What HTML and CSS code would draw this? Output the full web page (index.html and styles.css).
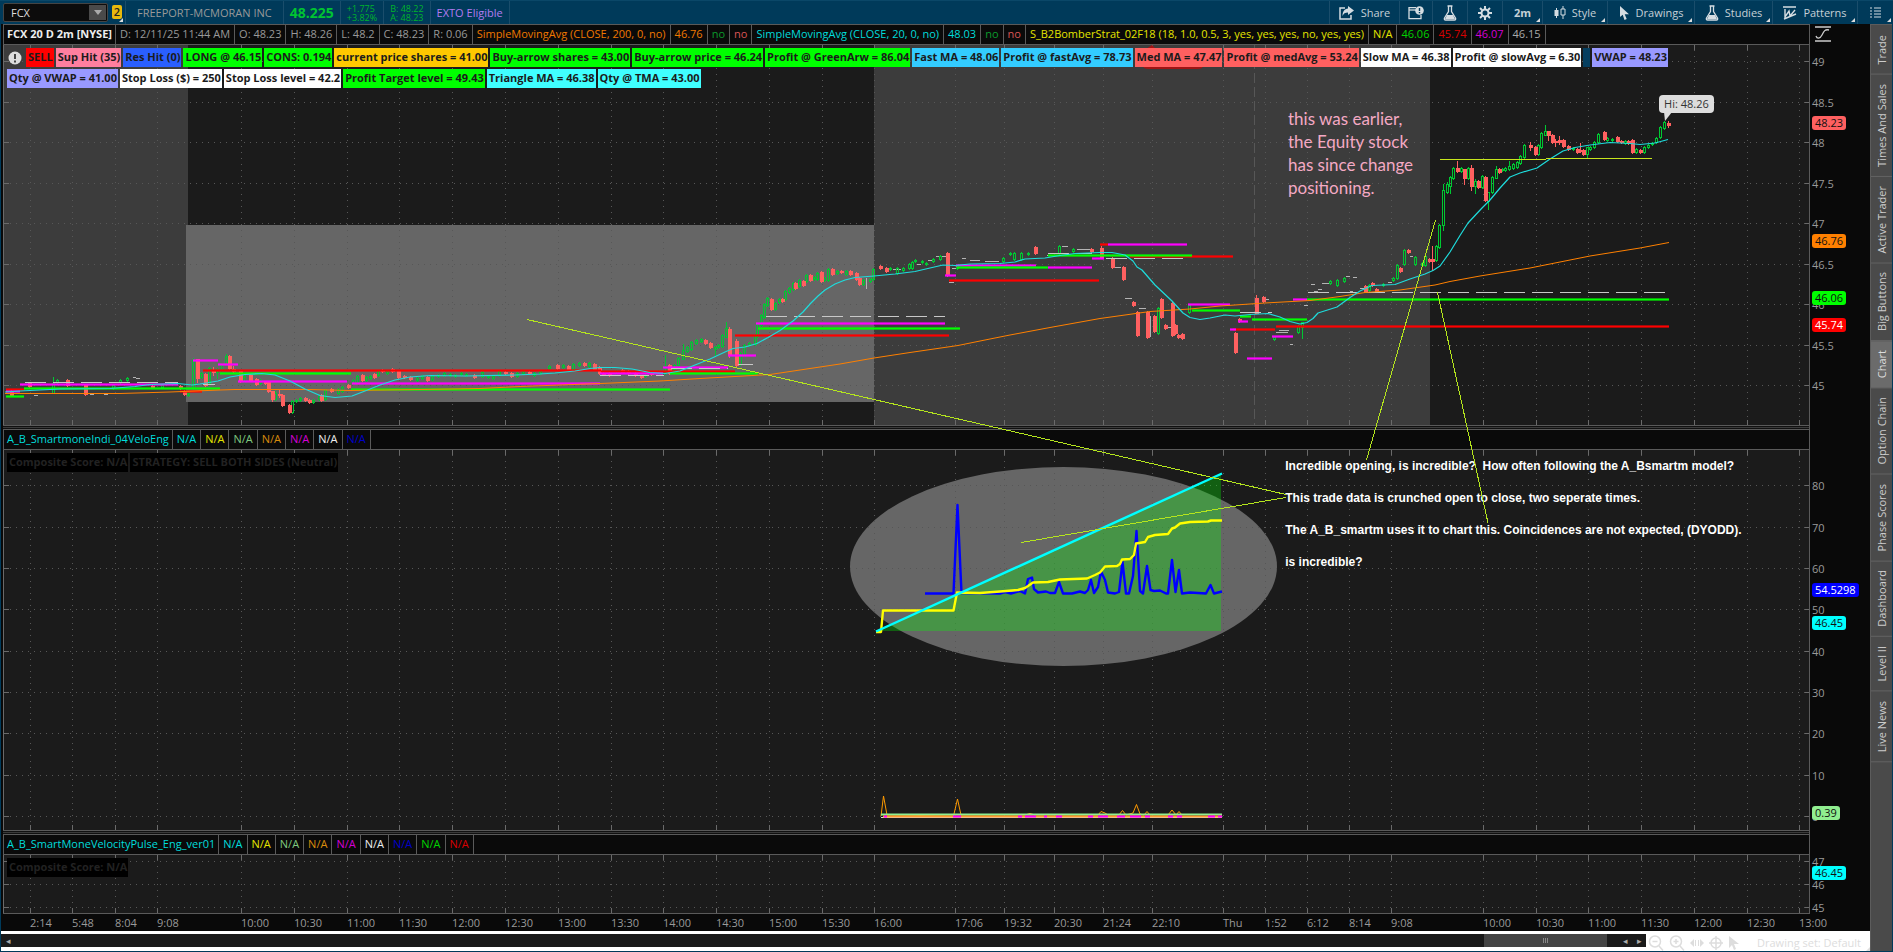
FILE: index.html
```
<!DOCTYPE html>
<html lang="en">
<head>
<meta charset="utf-8">
<title>FCX 20 D 2m</title>
<link rel="stylesheet" href="styles.css">
</head>
<body>
<header class="toolbar">
  <div class="symbol">
    <input class="symbol-input" type="text" value="FCX" aria-label="Symbol">
    <button class="symbol-drop" aria-label="Recent symbols"><svg width="10" height="6" viewBox="0 0 10 6"><path d="M1 0h8L5 5z" fill="#aaa"/></svg></button>
  </div>
  <button class="link-badge corner" aria-label="Link group"><span class="badge">2</span></button>
  <div class="tcell name">FREEPORT-MCMORAN INC</div>
  <div class="tcell last">48.225</div>
  <div class="tcell pair"><span>+1.775</span><span>+3.82%</span></div>
  <div class="tcell pair"><span>B: 48.22</span><span>A: 48.23</span></div>
  <div class="tcell exto">EXTO Eligible</div>
  <nav class="tools">
    <button class="tool t-share"><svg width="16" height="14" viewBox="0 0 16 14"><path d="M6 2H1v11h11V9" fill="none" stroke="#d5dde2" stroke-width="1.500"/><path d="M9 0l6 4.500-6 4.500V6.500C6 6.500 4.500 7.500 3.500 10 3.500 5.500 5.500 2.800 9 2.500z" fill="#d5dde2"/></svg>Share</button>
    <button class="tool t-alert" aria-label="Alerts"><svg width="16" height="14" viewBox="0 0 16 14"><path d="M8 1.700H1v11h12V9" fill="none" stroke="#d5dde2" stroke-width="1.300"/><path d="M1 4h7" stroke="#d5dde2" stroke-width="1.300"/><circle cx="11.500" cy="4.500" r="4.300" fill="#d5dde2"/><path d="M11.500 2v3M11.500 6v1.200" stroke="#003a5a" stroke-width="1.400"/></svg></button>
    <button class="tool t-lab" aria-label="Edit studies"><svg width="14" height="16" viewBox="0 0 14 16"><path d="M4.500 1h5M5.500 1v5.500L1.500 13c-.5 1 0 2 1 2h9c1 0 1.500-1 1-2L8.500 6.500V1" fill="none" stroke="#d5dde2" stroke-width="1.300"/><path d="M4 10h6l2 4H2z" fill="#d5dde2"/></svg></button>
    <button class="tool t-gear" aria-label="Settings"><svg width="14" height="14" viewBox="0 0 14 14"><circle cx="7" cy="7" r="3.500" fill="none" stroke="#d5dde2" stroke-width="2"/><path d="M7 0v3M7 11v3M0 7h3M11 7h3M2 2l2.200 2.200M9.800 9.800L12 12M12 2L9.800 4.200M4.200 9.800L2 12" stroke="#d5dde2" stroke-width="2"/></svg></button>
    <button class="tool t-agg corner"><b>2m</b></button>
    <button class="tool t-style corner"><svg width="12" height="14" viewBox="0 0 12 14"><path d="M2.500 2v10M9 0v3M9 9v4" stroke="#d5dde2"/><path d="M.5 4h4v6h-4z" fill="#d5dde2"/><path d="M7 3h4v6H7z" fill="none" stroke="#d5dde2"/></svg>Style</button>
    <button class="tool t-draw corner"><svg width="11" height="14" viewBox="0 0 11 14"><path d="M1 0v11l2.700-2.300L5.500 14l2.200-1-2-4.700H10z" fill="#d5dde2"/></svg>Drawings</button>
    <button class="tool t-study corner"><svg width="14" height="16" viewBox="0 0 14 16"><path d="M4.500 1h5M5.500 1v5.500L1.500 13c-.5 1 0 2 1 2h9c1 0 1.500-1 1-2L8.500 6.500V1" fill="none" stroke="#d5dde2" stroke-width="1.300"/><path d="M4 10h6l2 4H2z" fill="#d5dde2"/></svg>Studies</button>
    <button class="tool t-pat corner"><svg width="14" height="14" viewBox="0 0 14 14"><path d="M0 1h13M1 13L13 8M2 3v8l4-6 1 5 5-6" fill="none" stroke="#d5dde2" stroke-width="1.400"/></svg>Patterns</button>
    <button class="tool t-menu corner" aria-label="Menu"><svg width="11" height="11" viewBox="0 0 11 11"><path d="M0 1h2M4 1h7M0 4h2M4 4h7M0 7h2M4 7h7M0 10h2M4 10h7" stroke="#d5dde2"/></svg></button>
  </nav>
</header>

<main class="workspace">
  <section class="board">
    <div class="stack">
      <div class="studies row1">
        <span class="c-w"><b>FCX 20 D 2m [NYSE]</b></span><span>D: 12/11/25 11:44 AM</span><span>O: 48.23</span><span>H: 48.26</span><span>L: 48.2</span><span>C: 48.23</span><span>R: 0.06</span><span class="c-o">SimpleMovingAvg (CLOSE, 200, 0, no)</span><span class="c-o">46.76</span><span class="c-dg">no</span><span class="c-dr">no</span><span class="c-c">SimpleMovingAvg (CLOSE, 20, 0, no)</span><span class="c-c">48.03</span><span class="c-dg">no</span><span class="c-dr">no</span><span class="c-y">S_B2BomberStrat_02F18 (18, 1.0, 0.5, 3, yes, yes, yes, no, yes, yes)</span><span class="c-y">N/A</span><span class="c-g">46.06</span><span class="c-r">45.74</span><span class="c-m">46.07</span><span class="c-l">46.15</span>
      </div>
      <div class="plot row2">
        <svg class="canvas" id="price" viewBox="3 45 1806 380" preserveAspectRatio="none"></svg>
        <div class="labels">
          <div class="label-row">
            <svg class="warn" width="14" height="14" viewBox="0 0 14 14"><circle cx="7" cy="7" r="6.500" fill="#ddd"/><path d="M7 3v5M7 9.500v2" stroke="#333" stroke-width="1.800"/></svg>
            <span class="tag b-r">SELL</span><span class="tag b-pk">Sup Hit (35)</span><span class="tag b-bl">Res Hit (0)</span><span class="tag b-g">LONG @ 46.15</span><span class="tag b-g">CONS: 0.194</span><span class="tag b-o">current price shares = 41.00</span><span class="tag b-g">Buy-arrow shares = 43.00</span><span class="tag b-g">Buy-arrow price = 46.24</span><span class="tag b-g">Profit @ GreenArw = 86.04</span><span class="tag b-sk">Fast MA = 48.06</span><span class="tag b-sk">Profit @ fastAvg = 78.73</span><span class="tag b-co">Med MA = 47.47</span><span class="tag b-co">Profit @ medAvg = 53.24</span><span class="tag b-w">Slow MA = 46.38</span><span class="tag b-w">Profit @ slowAvg = 6.30</span><span class="tag b-t"></span><span class="tag b-v">VWAP = 48.23</span>
          </div>
          <div class="label-row">
            <span class="tag b-v">Qty @ VWAP = 41.00</span><span class="tag b-w">Stop Loss ($) = 250</span><span class="tag b-w">Stop Loss level = 42.2</span><span class="tag b-g">Profit Target level = 49.43</span><span class="tag b-cy">Triangle MA = 46.38</span><span class="tag b-cy">Qty @ TMA = 43.00</span>
          </div>
        </div>
        <p class="memo">this was earlier,<br>the Equity stock<br>has since change<br>positioning.</p>
        <div class="callout">Hi: 48.26</div>
      </div>
      <div class="axis row2" id="axis1"><svg class="fit" width="16" height="16" viewBox="0 0 16 16"><path d="M0 1h16M0 15h16" stroke="#ccc" stroke-width="1.600"/><path d="M1 10c1 3 4 3 6-1s3-6 7-5" fill="none" stroke="#ccc" stroke-width="1.300"/></svg></div>
      <div class="split row3"></div>
      <div class="studies row4">
        <span class="c-c">A_B_SmartmoneIndi_04VeloEng</span><span class="c-c">N/A</span><span class="c-y">N/A</span><span class="c-lg">N/A</span><span class="c-a">N/A</span><span class="c-m">N/A</span><span class="c-w">N/A</span><span class="c-b">N/A</span>
      </div>
      <div class="plot row5">
        <svg class="canvas" id="velo" viewBox="3 450 1806 380" preserveAspectRatio="none"></svg>
        <div class="labels"><div class="label-row"><span class="tag b-k">Composite Score: N/A</span><span class="tag b-k">STRATEGY: SELL BOTH SIDES (Neutral)</span></div></div>
        <div class="notes"><p>Incredible opening, is incredible?&nbsp; How often following the A_Bsmartm model?</p><p>This trade data is crunched open to close, two seperate times.</p><p>The A_B_smartm uses it to chart this. Coincidences are not expected, (DYODD).</p><p>is incredible?</p></div>
      </div>
      <div class="axis row5" id="axis2"></div>
      <div class="split row6"></div>
      <div class="studies row7">
        <span class="c-c">A_B_SmartMoneVelocityPulse_Eng_ver01</span><span class="c-c">N/A</span><span class="c-y">N/A</span><span class="c-lg">N/A</span><span class="c-a">N/A</span><span class="c-m">N/A</span><span class="c-w">N/A</span><span class="c-b">N/A</span><span class="c-g">N/A</span><span class="c-r">N/A</span>
      </div>
      <div class="plot row8">
        <svg class="canvas" id="pulse" viewBox="3 855 1806 58" preserveAspectRatio="none"></svg>
        <div class="labels"><div class="label-row"><span class="tag b-k">Composite Score: N/A</span></div></div>
      </div>
      <div class="axis row8" id="axis3"></div>
      <div class="times row9" id="times"></div>
      <svg class="pointers" viewBox="3 24 1807 907" preserveAspectRatio="none"><path d="M527 319.500L1286 494.500M1021 542.500L1286 497.500M1435.500 220L1366.500 460M1437.500 292.500L1488 523" fill="none" stroke="#b5e61d"/></svg>
    </div>
    <footer class="bottom">
      <div class="scroll">
        <button class="sbtn" aria-label="Scroll left">◂</button>
        <span class="track"><span class="thumb"></span></span>
        <button class="sbtn" aria-label="Step left">◂</button>
        <button class="sbtn" aria-label="Step right">▸</button>
      </div>
      <div class="bottom-tools">
        <button class="btool" aria-label="Zoom out"><svg width="16" height="16" viewBox="0 0 16 16"><circle cx="7" cy="6.500" r="5.500"/><path d="M4.500 6.500h5M11 11l4 4.500"/></svg></button>
        <button class="btool" aria-label="Zoom in"><svg width="16" height="16" viewBox="0 0 16 16"><circle cx="7" cy="6.500" r="5.500"/><path d="M4.500 6.500h5M7 4v5M11 11l4 4.500"/></svg></button>
        <button class="btool" aria-label="Pan"><svg width="14" height="16" viewBox="0 0 14 16"><path d="M0 8l4-4v8zM14 8l-4-4v8z" fill="#ddd" stroke="none"/><path d="M5.500 5v6M8.500 5v6" stroke-width="1"/></svg></button>
        <button class="btool" aria-label="Crosshair"><svg width="14" height="16" viewBox="0 0 14 16"><circle cx="7" cy="8" r="5"/><path d="M7 1v14M0 8h14"/></svg></button>
        <button class="btool" aria-label="Pointer"><svg width="12" height="16" viewBox="0 0 12 16"><path d="M1 1v12l3-3 2 5 2-1-2-5h5z" fill="#ddd" stroke="none"/></svg></button>
        <button class="btool set corner">Drawing set: Default</button>
      </div>
    </footer>
  </section>
  <nav class="side">
    <button>Trade</button><button>Times And Sales</button><button>Active Trader</button><button>Big Buttons</button><button class="on">Chart</button><button>Option Chain</button><button>Phase Scores</button><button>Dashboard</button><button>Level II</button><button>Live News</button>
  </nav>
</main>
<script src="chart.js"></script>
</body>
</html>
```
FILE: styles.css
```
* { box-sizing: border-box; }
body { margin: 0; height: 100vh; display: flex; flex-direction: column; overflow: hidden; background: #003a5a; font: 11px/14px "Open Sans", sans-serif; color: #999; }
button { font: inherit; color: inherit; background: none; border: 0; padding: 0; }
p { margin: 0; }

.toolbar { height: 24px; flex: none; display: flex; align-items: stretch; border-top: 1px solid #0a4768; padding-left: 3px; white-space: nowrap; }
.symbol { display: flex; width: 105px; height: 19px; margin-top: 2px; background: #0c0c0c; border: 1px solid #444; border-radius: 2px; }
.symbol-input { flex: 1; min-width: 0; border: 0; padding: 0 0 0 7px; background: none; font: inherit; color: #ddd; }
.symbol-drop { width: 17px; margin: 1px; background: #4a4a4a; display: grid; place-items: center; }
.link-badge { width: 17px; display: flex; padding: 4px 0 0 4px; }
.badge { width: 10px; height: 14px; border-radius: 2px; background: #e8b90c; color: #222; font-weight: 600; text-align: center; }
.corner { position: relative; }
.corner::after { content: ""; position: absolute; right: 2px; bottom: 2px; border: 2px solid transparent; border-right-color: #ddd; border-bottom-color: #ddd; }
.tcell { display: flex; align-items: center; padding: 0 6px; border-right: 1px solid #1a4d6b; }
.name { padding: 0 11px; border-left: 1px solid #1a4d6b; }
.last { font-size: 14px; font-weight: 700; color: #00c432; }
.pair { flex-direction: column; align-items: flex-start; justify-content: center; font-size: 9px; line-height: 9px; color: #00b32c; }
.exto { color: #b27bf0; }
.tools { margin-left: auto; display: flex; color: #c5d0d7; }
.tool { display: flex; align-items: center; justify-content: center; gap: 6px; border-left: 1px solid #1a4d6b; }
.t-share { width: 70px; }
.t-alert { width: 33px; }
.t-lab, .t-gear { width: 35px; }
.t-agg { width: 40px; }
.t-style { width: 65px; }
.t-draw { width: 87px; }
.t-study { width: 78px; }
.t-pat { width: 85px; }
.t-menu { width: 36px; }

.workspace { flex: 1; min-height: 0; display: flex; margin: 0 1px 1px 1px; }
.board { flex: 1; min-width: 0; display: flex; flex-direction: column; background: #090909; }
.stack { position: relative; flex: 1; min-height: 0; margin-left: 2px; display: grid; grid-template-columns: minmax(0, 1fr) 60px; grid-template-rows: 21px minmax(0, 381fr) 3px 21px minmax(0, 381fr) 3px 21px minmax(0, 59fr) 17px; }
.stack > * { grid-column: 1; }
.stack > .axis { grid-column: 2; }
.row1 { grid-row: 1; } .row2 { grid-row: 2; } .row3 { grid-row: 3; } .row4 { grid-row: 4; } .row5 { grid-row: 5; }
.row6 { grid-row: 6; } .row7 { grid-row: 7; } .row8 { grid-row: 8; } .row9 { grid-row: 9; }
.studies { display: flex; border: 1px solid #5a5a5a; background: #0a0a0a; overflow: hidden; white-space: nowrap; line-height: 18px; }
.studies span { padding: 0 4px; border-right: 1px solid #5a5a5a; }
.studies span:first-child { padding: 0 3px; }
.split { border-right: 1px solid #5a5a5a; background: linear-gradient(#111 1px, #3a3a3a 1px, #3a3a3a 2px, #111 2px); }
.c-w { color: #eee; } .c-o { color: #ef7800; } .c-a { color: #d98b0c; } .c-dg { color: #0a9a2c; } .c-dr { color: #d95555; }
.c-c { color: #00dcdc; } .c-y { color: #e4e400; } .c-g { color: #00d400; } .c-r { color: #d80000; } .c-m { color: #d400d4; }
.c-l { color: #aaa; } .c-lg { color: #7fc97f; } .c-b { color: #0000c8; }

.plot { position: relative; border: solid #5a5a5a; border-width: 0 1px 1px 0; background: #1b1b1b; }
.canvas, .pointers { position: absolute; inset: 0; width: 100%; height: 100%; }
.pointers { width: calc(100% - 60px); shape-rendering: crispEdges; pointer-events: none; z-index: 2; }
.labels { position: relative; display: flex; flex-direction: column; gap: 2px; padding: 3px 0 0 4px; }
.label-row { display: flex; gap: 2px; height: 19px; }
.warn { margin: 3px 2px 0 1px; flex: none; }
.tag { padding: 0 1px 0 2px; font-weight: 700; line-height: 18px; white-space: nowrap; color: #1b1b1b; }
.b-r { background: #f00; } .b-pk { background: #ff7f9f; } .b-bl { background: #2a5fff; } .b-g { background: #0f0; }
.b-o { background: #ffc800; } .b-sk { background: #33ccff; } .b-co { background: #ff6060; } .b-w { background: #fff; }
.b-t { background: #063f60; width: 7px; } .b-v { background: #9999ff; } .b-cy { background: #40ffff; } .b-k { background: #000; color: #222; }
.memo { position: absolute; left: 71.150%; top: 16.200%; font: 17px/23px Lato, sans-serif; color: #f4a9c4; white-space: nowrap; }
.callout { position: absolute; left: 91.700%; top: 13.100%; padding: 1px 5px; height: 18px; line-height: 16px; background: #ddd; color: #333; border-radius: 4px; white-space: nowrap; }
.notes { position: absolute; left: 71%; top: 0; font: bold 12px/32px "Liberation Sans", Arial, sans-serif; color: #fff; white-space: nowrap; }

.axis { position: relative; }
.fit { position: absolute; left: 5px; top: -19px; }
.tick, .bubble { position: absolute; left: 2px; transform: translateY(-50%); }
.bubble { padding: 0 3px; border-radius: 3px; line-height: 14px; color: #111; }
.bubble.light { color: #fff; }
.times { position: relative; }
.time { position: absolute; top: 2px; }

.bottom { height: 20px; flex: none; display: flex; background: #fff; padding-top: 3px; }
.scroll { flex: 1; height: 13px; display: flex; align-items: center; background: #1a1a1a; color: #999; }
.sbtn { width: 14px; font-size: 9px; line-height: 13px; color: #aaa; }
.track { flex: 1; height: 13px; display: flex; justify-content: flex-end; }
.thumb { width: 123px; background: repeating-linear-gradient(90deg, #888 0 1px, transparent 1px 2px) center / 5px 5px no-repeat #444; margin-right: 11px; }
.bottom-tools { width: 224px; display: flex; align-items: center; gap: 5px; padding-left: 2px; color: #ddd; }
.btool { height: 16px; }
.btool svg { display: block; fill: none; stroke: #ddd; stroke-width: 1.5; }
.set { flex: 1; text-align: right; padding-right: 9px; }
.set::after { right: 0; bottom: 0; }

.side { width: 22px; flex: none; display: flex; flex-direction: column; background: #4a4a4a; border-left: 1px solid #5c5c5c; border-top: 1px solid #5c5c5c; padding-top: 1px; color: #ccc; }
.side button { writing-mode: vertical-rl; transform: rotate(180deg); padding: 9px 0; line-height: 21px; border-top: 1px solid #636363; text-align: center; }
.side .on { background: #6b6b6b; color: #ddd; }
```
FILE: chart.js
```
const NS = 'http://www.w3.org/2000/svg';
const GREEN = '#00c832', RED = '#ff6060', GRAY = '#b4b4b4';

function add(svg, tag, attrs) {
  const el = document.createElementNS(NS, tag);
  for (const k in attrs) el.setAttribute(k, attrs[k]);
  svg.appendChild(el);
  return el;
}
function line(svg, d, stroke, width, extra) {
  return add(svg, 'path', Object.assign({ d, stroke, 'stroke-width': width || 1, fill: 'none' }, extra));
}
function poly(svg, points, stroke, width) {
  add(svg, 'polyline', { points, stroke, 'stroke-width': width, fill: 'none', 'stroke-linejoin': 'round' });
}

const times = [[30,'2:14'],[72,'5:48'],[115,'8:04'],[157,'9:08'],[241,'10:00'],[294,'10:30'],[347,'11:00'],[399,'11:30'],[452,'12:00'],[505,'12:30'],[558,'13:00'],[611,'13:30'],[663,'14:00'],[716,'14:30'],[769,'15:00'],[822,'15:30'],[874,'16:00'],[955,'17:06'],[1004,'19:32'],[1054,'20:30'],[1103,'21:24'],[1152,'22:10'],[1223,'Thu'],[1265,'1:52'],[1307,'6:12'],[1349,'8:14'],[1391,'9:08'],[1483,'10:00'],[1536,'10:30'],[1588,'11:00'],[1641,'11:30'],[1694,'12:00'],[1747,'12:30'],[1799,'13:00']];

function grid(svg, top, bottom, rows) {
  let dots = '', ticks = '', hdots = '';
  for (const [x] of times) {
    dots += `M${x + .5} ${top + 5}V${bottom - 5}`;
    ticks += `M${x + .5} ${top}v5M${x + .5} ${bottom - 5}v5`;
  }
  for (const y of rows) {
    hdots += `M10 ${y + .5}H1805`;
    ticks += `M4 ${y + .5}h5M1805 ${y + .5}h5`;
  }
  const crisp = { 'stroke-dasharray': '1 5', 'shape-rendering': 'crispEdges' };
  line(svg, dots, '#575757', 1, crisp);
  line(svg, hdots, '#575757', 1, crisp);
  line(svg, `${ticks}M3.5 ${top}V${bottom}`, '#6a6a6a', 1, { 'shape-rendering': 'crispEdges' });
}

function axis(id, top, height, ticks, bubbles) {
  const box = document.getElementById(id);
  const put = (cls, y, text, bg) => {
    const el = document.createElement('span');
    el.className = cls;
    el.textContent = text;
    el.style.top = ((y - top) / height * 100) + '%';
    if (bg) el.style.background = bg;
    box.appendChild(el);
  };
  ticks.forEach(([y, t]) => put('tick', y, t));
  bubbles.forEach(([y, t, bg, light]) => put('bubble' + (light ? ' light' : ''), y, t, bg));
}

/* price panel */
const price = document.getElementById('price');
add(price, 'rect', { x: 4, y: 45, width: 184, height: 380, fill: '#3c3c3c' });
add(price, 'rect', { x: 874, y: 45, width: 556, height: 380, fill: '#3c3c3c' });
add(price, 'rect', { x: 186, y: 225, width: 688, height: 177, fill: '#666' });
const rows1 = [61,102,142,183,223,264,304,345,385];
grid(price, 45, 425, rows1);
line(price, 'M1254.500 45V425', '#575757', 1, { 'stroke-dasharray': '10 4' });
add(price, 'path', { d: 'M1152 45l6 6h45v15q0 3-6 3h-48q-6 0-6-3V51z', fill: '#a01414' });

/* extended-hours prints: x1, x2, y */
const prints = [[133,136,377],[136,140,378],[34,38,395],[43,47,393],[70,74,393],[90,94,394],[104,108,394],[893,901,269],[917,921,264],[928,932,260],[936,946,256],[962,966,258],[970,980,260],[985,999,261],[1062,1068,246],[1077,1090,249],[1115,1121,267],[1125,1132,298],[1139,1146,308],[1167,1171,327],[1265,1269,299],[1276,1288,332],[1279,1289,330],[1290,1293,344],[1304,1308,305],[1311,1315,284],[1314,1318,291],[1318,1322,289],[1322,1329,283],[1346,1350,276],[1353,1357,277],[1350,1353,291],[1360,1364,288],[1388,1392,282],[1410,1413,256],[952,956,268],[949,954,282],[1047,1053,255]];
line(price, prints.map(([a, b, y]) => `M${a} ${y + .5}H${b}`).join(''), GRAY, 1);

/* candles: direction x bodyTop bodyBottom [wickTop wickBottom] */
const candles = `r 11 391 395,r 29 383 386,g 53 383 393 377 393,g 57 380 382,r 67 380 385,r 85 385 394,g 113 385 388,g 120 380 382,g 127 378 380,r 152 386 387,g 162 385 387,r 180 386 388,r 184 391 394,g 188 393 395,g 193 360 388 358 388,r 197 359 378 359 382,g 201 373 377,r 205 374 385,g 209 368 384,r 213 370 372 367 375,g 217 370 372 368 378,g 221 365 370,g 226 356 364 354 364,r 229 356 368,r 233 369 371 366 372,r 240 371 381,g 244 376 381,r 250 375 380,r 256 379 384,g 260 380 383,r 265 382 383,r 268 382 391,r 272 391 399 391 401,g 275 393 399 391 400,r 279 394 395 390 397,r 282 395 405,r 289 405 412,g 292 401 412,g 296 400 401,g 300 398 400,r 305 398 400,r 309 400 402,g 313 400 402,g 319 396 399,r 321 395 400,g 325 390 399,r 331 389 391,g 338 389 393,g 342 387 391,r 348 385 387,g 353 380 383,g 357 376 382,r 362 375 380,g 366 377 380,g 370 376 378,r 374 374 377,g 378 371 375,r 382 370 371,g 387 371 373,r 392 369 371,r 398 371 377,r 404 376 377,r 410 377 379,g 417 378 380,g 422 376 378,r 427 377 380,g 432 376 379,g 438 375 376,g 444 373 375,g 450 374 375,g 455 375 376,g 461 373 374,g 466 374 375,r 474 375 377,
g 482 372 376,g 488 376 377,g 493 376 378,g 499 371 375,r 505 372 373,r 511 373 376,g 517 373 376,g 523 371 373,r 529 372 373,g 534 373 375,g 540 371 373,g 549 366 368,r 557 365 368,g 563 365 367,r 568 366 369,g 573 364 369,g 579 363 365,r 584 363 365,g 589 363 366,r 594 364 369,r 599 367 373,r 603 373 374,r 609 373 375,g 616 371 373,r 622 370 372,r 628 371 373,r 635 373 375,r 641 376 377,g 645 373 376,r 651 373 374,g 658 371 373,g 665 366 372 355 374,r 669 365 373,g 674 365 369,g 678 358 365,g 683 350 359 344 359,g 687 347 351,g 691 342 349,g 696 340 343,g 701 339 341,r 705 340 343,r 710 343 347,g 715 347 349 346 356,g 718 345 347,g 722 335 346,g 726 328 337 322 337,r 729 329 355 327 357,r 736 341 365 339 367,g 740 353 364,g 744 345 355,g 749 343 345,g 755 335 344,g 757 324 336,g 761 315 325,g 764 304 317,g 767 298 305,r 771 299 309,g 775 303 309,g 779 299 302,r 782 299 301,g 785 291 299,g 789 288 292,g 793 283 289,r 795 283 288,g 799 280 286,r 803 281 285,g 806 275 281,r 810 275 280,g 814 277 279,g 817 273 279,r 821 272 281,g 824 278 280,g 828 269 280,r 832 269 274,g 837 271 273,r 841 271 272,g 846 271 274,r 850 271 274,r 856 273 279,r 859 278 284,g 863 280 284,g 870 279 281,g 873 269 279,
r 880 266 268,r 886 268 271,g 890 268 269,g 897 268 273,g 903 268 270,g 909 264 268,g 912 262 268,g 915 260 261,g 922 261 262,g 926 263 264,g 933 259 261,g 940 256 259,r 947 253 275,g 957 266 268,g 1003 258 261,g 1010 253 254,g 1014 253 259,g 1021 253 259,g 1028 253 254,r 1035 247 253,g 1059 246 253,g 1073 249 251,r 1091 249 251,r 1101 248 258 246 258,r 1112 258 267,r 1123 267 279,r 1133 302 305,r 1137 312 335,r 1147 312 337,r 1154 316 331,g 1158 308 333,r 1161 299 317,r 1165 325 328,r 1172 303 335,r 1175 325 333,r 1178 335 337,r 1182 334 338,g 1189 305 312,r 1235 333 352,r 1239 319 321,r 1256 298 313 295 313,r 1263 297 301,g 1274 337 339,g 1298 326 332,g 1302 322 327 322 338,g 1330 281 283,g 1337 280 285,g 1344 278 281,r 1365 286 291,g 1369 285 290,r 1372 283 285,r 1376 289 291,g 1383 284 285,g 1393 278 280,g 1397 265 278,r 1400 268 271,g 1404 250 264,r 1408 250 252,g 1415 257 264,g 1422 263 265,g 1425 256 265,r 1429 259 261,r 1432 259 261 246 270,
g 1436 246 260,g 1439 225 247,g 1443 190 225 184 230,g 1447 184 192 182 193,g 1450 177 186 176 193,g 1453 168 178,r 1457 168 171 161 172,g 1461 168 171,r 1464 169 178 169 184,g 1468 168 178,r 1471 168 186 165 190,g 1475 181 186 179 193,r 1478 181 187,g 1482 176 187,r 1485 177 200,g 1488 192 201 192 209,g 1492 177 192,g 1496 169 178 166 178,r 1499 169 172,g 1502 169 170,g 1505 168 170,g 1509 166 169 161 170,g 1513 164 168,g 1517 162 167,g 1520 156 163,g 1524 145 157,r 1530 145 147 142 150,r 1535 147 154,g 1538 145 154,g 1541 133 147,g 1545 131 135 125 135,r 1548 131 135 131 140,r 1552 135 142,r 1555 141 142 139 146,r 1559 140 142 136 144,r 1563 140 146,r 1568 146 149,g 1573 148 149,r 1577 149 152,r 1580 150 151 143 152,r 1583 150 154,g 1587 147 154 147 158,g 1590 147 149,g 1594 142 147,g 1598 134 142,r 1604 132 139,g 1607 138 140,g 1612 139 140,r 1617 137 141,r 1621 141 142,g 1625 141 143,r 1628 141 143,r 1632 140 152,g 1636 149 152,r 1640 150 152,g 1644 147 152,g 1648 145 147,g 1652 143 144,g 1656 138 142,g 1660 127 137,g 1664 122 128,r 1668 123 125 121 127`;
const shapes = { g: '', gw: '', r: '', rw: '' };
for (const item of candles.split(',')) {
  const [dir, ...nums] = item.trim().split(' ');
  const [x, top, bottom] = nums.map(Number);
  const wt = nums.length > 3 ? +nums[3] : top - 1;
  const wb = nums.length > 3 ? +nums[4] : bottom + 1;
  if (dir === 'g') {
    shapes.g += `M${x - .5} ${top + .5}h2V${bottom + .5}h-2z`;
    shapes.gw += `M${x + .5} ${wt}V${top}M${x + .5} ${bottom}V${wb + 1}`;
  } else {
    shapes.r += `M${x - 1} ${top}h4V${bottom + 1}h-4z`;
    shapes.rw += `M${x + .5} ${wt}V${wb + 1}`;
  }
}
const sharp = { 'shape-rendering': 'crispEdges' };
line(price, shapes.g, GREEN, 1, sharp);
line(price, shapes.gw, GREEN, 1, sharp);
line(price, shapes.rw, RED, 1, sharp);
add(price, 'path', { d: shapes.r, fill: RED });
line(price, 'M866.500 278V289M1150.500 316V337', GRAY, 1);

/* support and resistance levels: x1, x2, y */
const levels = {
  '#ff0000': [[6,25,389],[180,202,391],[203,601,370],[601,735,371],[735,949,335],[949,1099,280],[1100,1108,244],[1130,1233,256],[1233,1275,329],[1276,1669,326]],
  '#ff00ff': [[6,20,391],[20,178,384],[193,218,360],[218,238,364],[238,347,381],[352,600,383],[600,663,373],[663,728,367],[728,756,355],[756,945,323],[945,956,275],[956,1036,265],[1048,1092,267],[1092,1104,258],[1108,1187,244],[1188,1230,304],[1230,1236,329],[1238,1248,321],[1247,1272,358],[1272,1293,336],[1293,1307,299]],
  '#00ff00': [[6,24,396],[24,220,388],[220,351,373],[351,670,389],[670,758,373],[758,960,328],[957,1048,267],[1048,1192,255],[1192,1240,310],[1240,1251,316],[1252,1307,319],[1307,1669,299]]
};
const closes = [[25,178,382],[203,215,384],[600,664,375],[671,728,368],[738,753,364],[766,945,316],[1048,1092,253],[1106,1187,258],[1240,1272,312],[1308,1669,292]];
for (const color in levels) {
  const d = levels[color].map(([a, b, y]) => `M${a} ${y + .5}H${b}`).join('');
  line(price, d, color, 3, { opacity: .6 });
  line(price, d, color, 1);
}
line(price, closes.map(([a, b, y]) => `M${a} ${y + .5}H${b}`).join(''), '#c8c8c8', 1, { 'stroke-dasharray': '21 7' });

poly(price, '5,393.5 60,393.5 120,393.5 170,392 220,390 235,389.5 310,389.5 350,390.5 420,389.5 480,388.5 520,386.5 600,383.5 660,381 700,378.5 770,374.5 800,370 840,364 874,358 910,352.5 958,345.5 985,340 1010,335 1050,327.5 1100,318.5 1150,311.5 1190,309 1220,306 1265,303 1310,300.5 1340,296.5 1365,292.5 1400,290 1435,285 1450,281.5 1480,276 1530,268 1590,256 1640,248 1669,242.5', '#ff8000', 1);
poly(price, '5,392 20,391 60,389 110,388.5 135,386.5 150,384.5 178,383.5 192,385 200,384 218,381 230,377 245,374.5 262,373.5 275,375 290,381 305,389 320,395.5 335,397.5 352,396 365,391 380,385 395,380 410,377 430,375.5 465,376 515,375 540,374 555,373 575,371 590,368.5 600,367.5 615,367.5 632,369 650,372.5 665,373.5 680,371 695,365 710,359 725,352 733,348.5 745,347 757,343.5 768,337.5 780,330.5 793,321 803,312 810,304 818,296 825,290 835,284 845,280 855,277.5 874,276 895,274 915,271.5 930,268 943,265 955,265.5 970,264 1000,263.5 1015,262 1025,259 1045,258 1060,255.5 1075,253.5 1100,252.5 1112,252.5 1125,255 1133,261 1137,267 1142,270 1155,285 1172,301 1183,313 1190,317.5 1200,319.5 1210,318 1225,315 1235,316 1250,314.5 1268,313.5 1280,317 1290,321.5 1300,324 1307,322.5 1313,318.5 1318,313 1337,307 1350,297.5 1360,291 1372,285.5 1395,284.5 1410,279 1425,274 1433,270.5 1440,266 1450,252 1460,235.5 1468,223 1482,208 1490,200 1500,188 1510,177 1520,173 1537,168 1550,159 1563,151 1575,147.5 1590,145 1610,142.5 1630,143.5 1640,144.5 1655,143 1668,139.5', '#1edcdc', 1.2);
line(price, 'M1440 159.500H1546M1546 158.500H1652', '#c8e61d', 1);
add(price, 'path', { d: 'M1664 112h8l-7 9z', fill: '#ddd' });

/* velocity panel */
const velo = document.getElementById('velo');
add(velo, 'ellipse', { cx: 1063.5, cy: 566.5, rx: 213.5, ry: 99.5, fill: '#666' });
const rows2 = [485,527,568,609,651,692,733,775,816];
grid(velo, 450, 830, rows2);
add(velo, 'path', { d: 'M876 631L1221 473.500V631z', fill: '#00ff00', opacity: .3 });
poly(velo, '925,593.5 953.5,593.5 957.5,505 961.5,593 1000,593.5 1005,592 1011,593.5 1020,591 1025,593.5 1028,579 1032,577.5 1034,589 1038,592.5 1046,591.5 1050,593 1055,593 1059,582 1063,593.5 1072,593.5 1080,591.5 1085,593 1088,590 1091,580 1094,593 1098,587 1101,571.5 1105,580 1108,592.5 1115,593.5 1119,592 1122.5,562 1126,593.5 1129,593.5 1133,576 1136.5,531 1140,591 1143,593.5 1147,566 1150.5,590 1154,591 1160,590.5 1166,593.5 1168,593.5 1172,560 1175.5,592 1179,570 1182,593.5 1190,592.5 1206,593.5 1210.5,585 1214,593.5 1222,591.5', '#0000ff', 2.4);
poly(velo, '876,632 881,632 883,610.5 953.5,610.5 957,592.5 980,593 1000,591.5 1018,590 1025,588 1028,586 1033,582.5 1048,582 1060,579.5 1087,578.5 1095,575 1100,572.5 1105,566.5 1117,566 1120,564 1122,559.5 1130,559 1134,555 1136,543.5 1145,542 1148,537 1155,535 1168,534 1172,528.5 1175,527.5 1180,523.5 1190,522 1208,521.5 1211,520.5 1222,520.5', '#ffff00', 2.4);
poly(velo, '876,631.5 1222,473.5', '#00ffff', 2.4);
poly(velo, '881,816 883.5,796 887,815 953.5,816 957.5,799 961,815 1025,815 1030,813.5 1035,815 1098,815 1101,811.5 1105,813 1108,815 1119,815 1122.5,810.5 1126,815 1133,813 1136.5,804.5 1140,814 1144,815 1147,811.5 1150,815 1168,815 1172,810 1176,815 1179,811.5 1182,815', '#ff9a00', 1);
line(velo, 'M881 814.500H1222', '#90ee90', 2);
line(velo, 'M881 817.500H1222', '#dddddd', 1);
line(velo, 'M883 816.500H1222', '#ff9a30', 2);
const bursts = [[884,887],[953,961],[1018,1022],[1025,1036],[1044,1047],[1056,1062],[1088,1093],[1098,1108],[1117,1125],[1130,1141],[1145,1150],[1168,1173],[1177,1182],[1208,1215],[1218,1222]];
line(velo, bursts.map(([a, b]) => `M${a} 816.500H${b}`).join(''), '#ff00ff', 2);

/* pulse panel */
const rows3 = [861,884,907];
grid(document.getElementById('pulse'), 855, 913, rows3);

axis('axis1', 45, 381, ['49','48.5','48','47.5','47','46.5','46','45.5','45'].map((t, i) => [rows1[i] + 1, t]),
  [[123,'48.23','#ff6060'],[241,'46.76','#ff8000'],[298,'46.06','#00ff00'],[325,'45.74','#ff0000',1]]);
axis('axis2', 450, 381, [80,70,60,50,40,30,20,10,0].map((t, i) => [rows2[i] + 1, t]),
  [[590,'54.5298','#0000ff',1],[623,'46.45','#00ffff'],[813,'0.39','#90ee90']]);
axis('axis3', 855, 59, ['47','46','45'].map((t, i) => [rows3[i] + 1, t]), [[873,'46.45','#00ffff']]);

const timeBox = document.getElementById('times');
for (const [x, t] of times) {
  const el = document.createElement('span');
  el.className = 'time';
  el.textContent = t;
  el.style.left = ((x - 3) / 1807 * 100) + '%';
  timeBox.appendChild(el);
}
```
